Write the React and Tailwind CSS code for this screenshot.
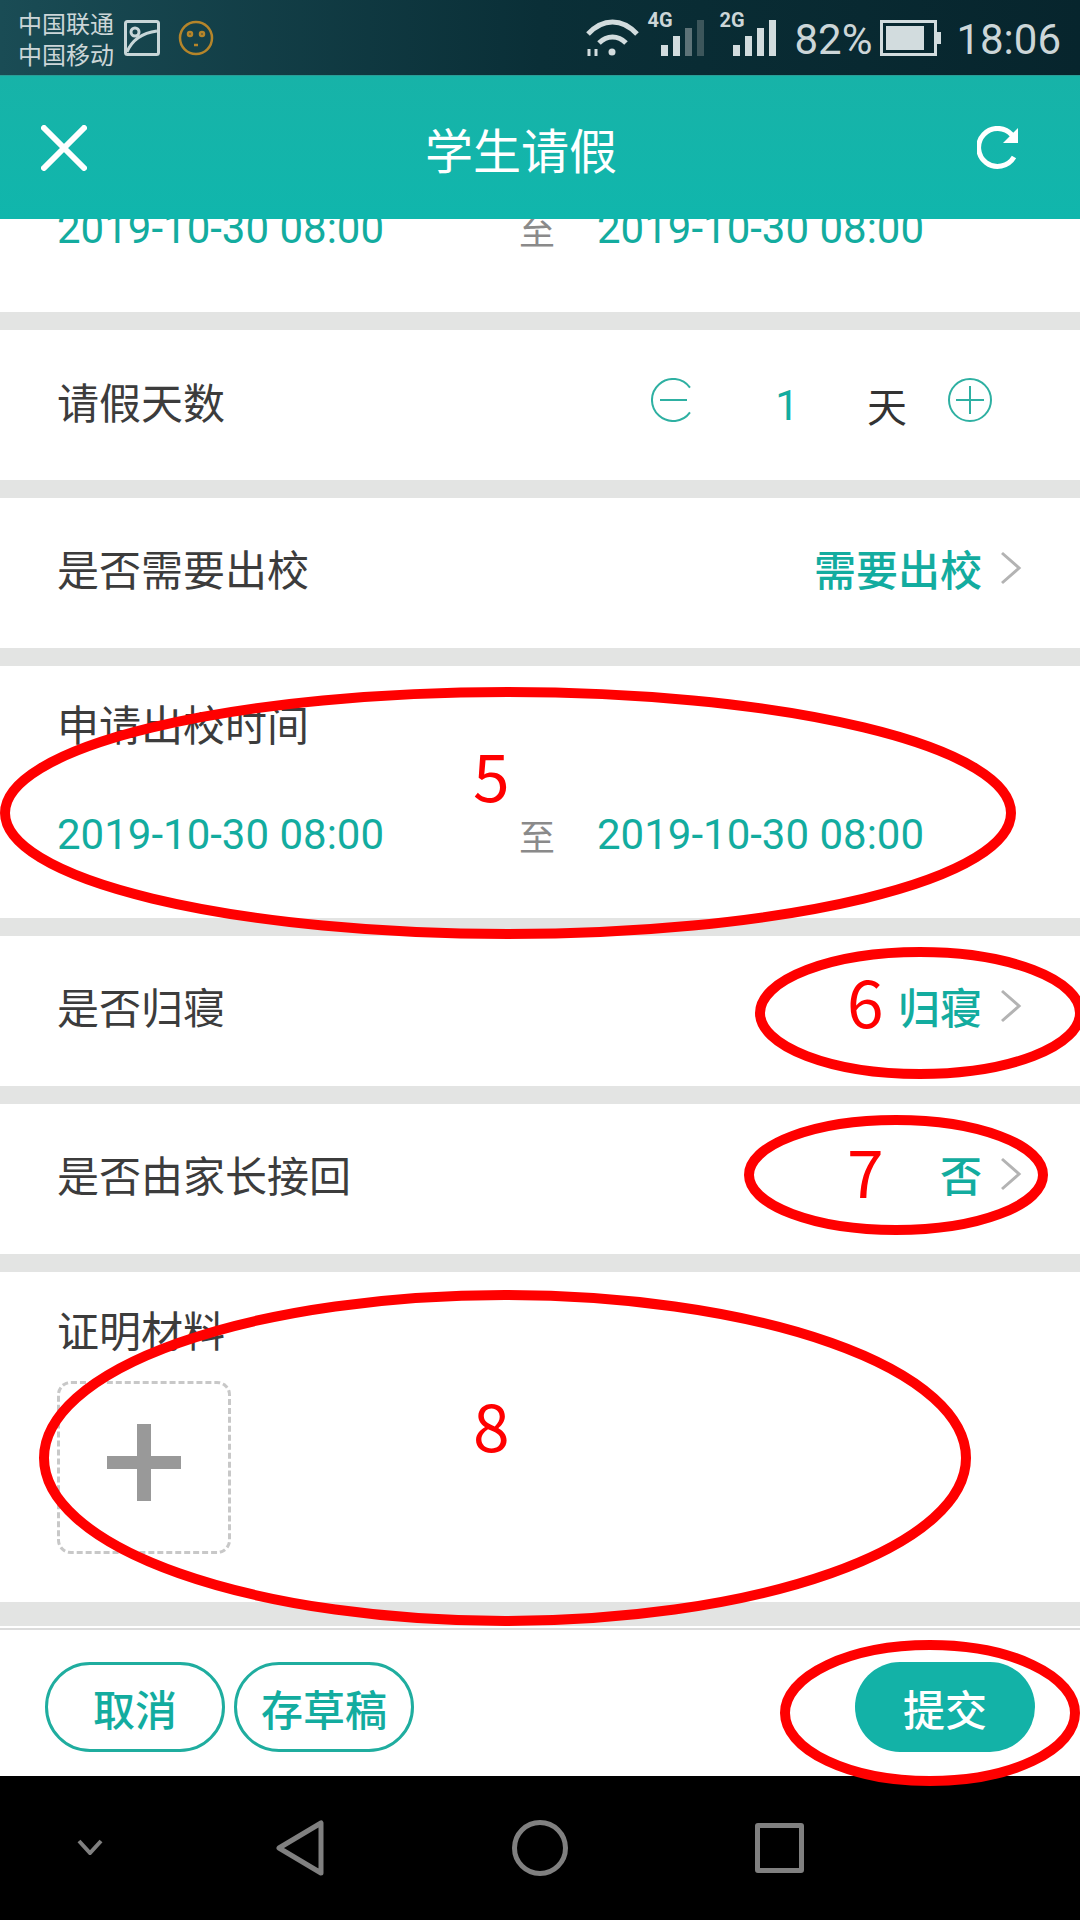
import React from 'react';

const cjk = "font-['Noto_Sans_CJK_SC','Noto_Sans',sans-serif]";
const roboto = "font-['Roboto','Noto_Sans_CJK_SC',sans-serif]";

const Divider = ({ className = 'h-[18px]' }) => <div className={`${className} bg-[#e3e4e3] shrink-0`} />;

const Chevron = () => (
  <svg width="22" height="34" viewBox="0 0 22 34" fill="none" stroke="#b3b3b3" strokeWidth="3">
    <path d="M2 2l17 15L2 32" />
  </svg>
);

const DateRange = () => (
  <div className={`flex items-center text-[42px] leading-[60px] text-[#13ac9f] ${roboto}`}>
    <span className="w-[462px] shrink-0">2019-10-30 08:00</span>
    <span className={`w-[78px] shrink-0 text-[36px] text-[#8a8a8a] ${cjk}`}>至</span>
    <span>2019-10-30 08:00</span>
  </div>
);

const SelectRow = ({ label, value }) => (
  <div className="h-[150px] shrink-0 bg-white flex items-center justify-between pl-[57px] pr-[58px] pb-[11px]">
    <span className="text-[42px] text-[#3c3c3c]">{label}</span>
    <div className="flex items-center gap-[18px]">
      <span className="text-[42px] font-medium text-[#13ac9f]">{value}</span>
      <Chevron />
    </div>
  </div>
);

const StatusBar = () => (
  <div className="h-[75px] shrink-0 flex items-center pl-[18px] pr-[19px] bg-gradient-to-r from-[#1a4c55] via-[#0a2f37] to-[#07252d] text-[#ccd6d8]">
    <div className={`w-[106px] text-[24px] leading-[31px] ${cjk}`}>
      <div>中国联通</div>
      <div>中国移动</div>
    </div>
    <svg width="36" height="36" viewBox="0 0 36 36" fill="none" stroke="#c8d6d8" strokeWidth="3" className="mr-[18px]">
      <rect x="1.5" y="1.5" width="33" height="33" rx="2" />
      <circle cx="11" cy="12" r="4" />
      <path d="M3 32C8 20 18 13 33 11" />
    </svg>
    <svg width="36" height="36" viewBox="0 0 36 36" fill="none" stroke="#b5852a" strokeWidth="2.5">
      <circle cx="18" cy="18" r="16" />
      <circle cx="12" cy="14" r="2" />
      <circle cx="24" cy="14" r="2" />
      <path d="M16 25h4" />
    </svg>
    <div className="flex-1" />
    <svg width="54" height="38" viewBox="0 0 54 38" fill="none" stroke="#d2dcde" strokeWidth="5" className="mr-[8px]">
      <path d="M3 15C18 -1 37 -1 52 15" />
      <path d="M14 24c8-8 19-8 27 0" />
      <circle cx="27" cy="33" r="3.5" fill="#d2dcde" stroke="none" />
      <path d="M4 37v-7M11 37v-7" strokeWidth="3" />
    </svg>
    {/* 4G bars, last ones are dim */}
    <div className="relative w-[57px] h-[40px] self-end mb-[19px]">
      <span className={`absolute left-0 top-[-11px] text-[20px] font-bold ${roboto}`}>4G</span>
      <div className="absolute right-0 bottom-0 flex items-end gap-[5px]">
        <div className="w-[7px] h-[11px] bg-[#d2dcde]" />
        <div className="w-[7px] h-[20px] bg-[#d2dcde]" />
        <div className="w-[7px] h-[28px] bg-[#5d7378]" />
        <div className="w-[7px] h-[36px] bg-[#3c565b]" />
      </div>
    </div>
    <div className="relative w-[57px] h-[40px] ml-[15px] self-end mb-[19px]">
      <span className={`absolute left-0 top-[-11px] text-[20px] font-bold ${roboto}`}>2G</span>
      <div className="absolute right-0 bottom-0 flex items-end gap-[5px]">
        <div className="w-[7px] h-[11px] bg-[#d2dcde]" />
        <div className="w-[7px] h-[20px] bg-[#d2dcde]" />
        <div className="w-[7px] h-[28px] bg-[#d2dcde]" />
        <div className="w-[7px] h-[36px] bg-[#d2dcde]" />
      </div>
    </div>
    <span className={`ml-[18px] mt-[4px] text-[42px] leading-none ${roboto}`}>82%</span>
    <div className="ml-[8px] flex items-center">
      <div className="w-[57px] h-[36px] border-[3px] border-[#d2dcde] p-[3px] flex">
        <div className="w-[38px] bg-[#d2dcde]" />
      </div>
      <div className="w-[4px] h-[12px] bg-[#d2dcde]" />
    </div>
    <span className={`ml-[15px] mt-[4px] text-[42px] leading-none ${roboto}`}>18:06</span>
  </div>
);

const Header = () => (
  <div className="h-[144px] shrink-0 flex items-center justify-between pl-[41px] pr-[59px] bg-gradient-to-b from-[#17b3a8] to-[#10b6ac] border-t border-[#2a9d96]">
    <svg width="46" height="46" viewBox="0 0 46 46" fill="none" stroke="white" strokeWidth="6" strokeLinecap="round">
      <path d="M3 3l40 40M43 3L3 43" />
    </svg>
    <span className="text-[48px] text-white -ml-[22px]">学生请假</span>
    <svg width="44" height="44" viewBox="0 0 44 44" fill="none" stroke="white" strokeWidth="5">
      <path d="M37 31A19 19 0 1 1 35 9" />
      <path d="M41 2v15H26" strokeWidth="0" fill="white" />
    </svg>
  </div>
);

const DayStepper = () => (
  <div className="h-[150px] shrink-0 bg-white flex items-center justify-between pl-[57px] pr-[88px] pb-[10px]">
    <span className="text-[42px] text-[#3c3c3c]">请假天数</span>
    <div className="flex items-center">
      <svg width="40" height="44" viewBox="0 0 40 44" fill="none" stroke="#2eb0a2" strokeWidth="2">
        <path d="M39 9.7A21 21 0 1 0 39 34.3" />
        <path d="M9 22h27" />
      </svg>
      <span className={`w-[40px] ml-[76px] pt-[10px] text-[42px] text-[#13ac9f] text-center ${roboto}`}>1</span>
      <span className="w-[40px] ml-[60px] pt-[10px] text-[40px] text-[#333]">天</span>
      <svg width="44" height="44" viewBox="0 0 44 44" fill="none" stroke="#2eb0a2" strokeWidth="2" className="ml-[41px]">
        <circle cx="22" cy="22" r="21" />
        <path d="M8 22h28M22 8v28" />
      </svg>
    </div>
  </div>
);

const Footer = () => (
  <div className="h-[148px] shrink-0 bg-white border-t-2 border-[#dcdcdc] flex items-center justify-between pl-[45px] pr-[45px] pt-[8px]">
    <div className="flex items-center gap-[9px]">
      <div className="w-[180px] h-[90px] rounded-full border-[3px] border-[#1fad9f] flex items-center justify-center text-[42px] font-medium text-[#13ac9f]">取消</div>
      <div className="w-[180px] h-[90px] rounded-full border-[3px] border-[#1fad9f] flex items-center justify-center text-[42px] font-medium text-[#13ac9f]">存草稿</div>
    </div>
    <div className="w-[180px] h-[90px] rounded-full bg-[#13b2a7] flex items-center justify-center text-[42px] font-medium text-white">提交</div>
  </div>
);

const NavBar = () => (
  <div className="flex-1 bg-black flex items-center pl-[77px]">
    <svg width="26" height="16" viewBox="0 0 26 16" fill="none" stroke="#808080" strokeWidth="4" className="mt-[-2px]">
      <path d="M2 2l11 12L24 2" />
    </svg>
    <svg width="48" height="56" viewBox="0 0 48 56" fill="none" stroke="#808080" strokeWidth="5" strokeLinejoin="round" className="ml-[173px]">
      <path d="M45 3v50L3 28z" />
    </svg>
    <svg width="56" height="56" viewBox="0 0 56 56" fill="none" stroke="#808080" strokeWidth="5" className="ml-[188px]">
      <circle cx="28" cy="28" r="25.5" />
    </svg>
    <div className="w-[49px] h-[50px] ml-[187px] border-[5px] border-[#808080] rounded-[3px]" />
  </div>
);

// red marker scribbled over the screenshot
const marks = [
  { cx: 508, cy: 813, rx: 503, ry: 121 },
  { cx: 920, cy: 1013, rx: 160, ry: 61 },
  { cx: 896, cy: 1175, rx: 147, ry: 55 },
  { cx: 505, cy: 1458, rx: 461, ry: 163 },
  { cx: 930, cy: 1713, rx: 145, ry: 68 },
];

const Annotations = () => (
  <>
    <svg width="1080" height="1920" viewBox="0 0 1080 1920" fill="none" stroke="#ff0000" strokeWidth="10" className="absolute left-0 top-0 pointer-events-none">
      {marks.map((m) => (
        <ellipse key={m.cy} cx={m.cx} cy={m.cy} rx={m.rx} ry={m.ry} />
      ))}
    </svg>
    <span className="absolute left-[473px] top-[725px] text-[66px] leading-[96px] text-[#ff0000]">5</span>
    <span className="absolute left-[847px] top-[951px] text-[66px] leading-[96px] text-[#ff0000]">6</span>
    <span className="absolute left-[847px] top-[1121px] text-[66px] leading-[96px] text-[#ff0000]">7</span>
    <span className="absolute left-[473px] top-[1375px] text-[66px] leading-[96px] text-[#ff0000]">8</span>
  </>
);

export default function App() {
  return (
    <div className={`relative w-[1080px] h-[1920px] overflow-hidden flex flex-col bg-white ${cjk}`}>
      <StatusBar />
      <Header />

      {/* previous section, scrolled under the header */}
      <div className="h-[93px] shrink-0 overflow-hidden flex items-end pl-[57px] pb-[53px]">
        <DateRange />
      </div>
      <Divider />
      <DayStepper />
      <Divider />
      <SelectRow label="是否需要出校" value="需要出校" />
      <Divider />

      <div className="h-[252px] shrink-0 pl-[57px] pt-[27px]">
        <div className="text-[42px] leading-[60px] text-[#3c3c3c]">申请出校时间</div>
        <div className="mt-[52px]">
          <DateRange />
        </div>
      </div>
      <Divider />
      <SelectRow label="是否归寝" value="归寝" />
      <Divider />
      <SelectRow label="是否由家长接回" value="否" />
      <Divider />

      <div className="h-[330px] shrink-0 pl-[57px] pt-[27px]">
        <div className="text-[42px] leading-[60px] text-[#3c3c3c]">证明材料</div>
        <div className="mt-[22px] w-[174px] h-[173px] rounded-[14px] border-[3px] border-dashed border-[#c8c8c8] flex items-center justify-center pb-[10px]">
          <div className="relative w-[74px] h-[77px]">
            <div className="absolute left-[30px] top-0 w-[14px] h-[77px] bg-[#999]" />
            <div className="absolute left-0 top-[32px] w-[74px] h-[13px] bg-[#999]" />
          </div>
        </div>
      </div>
      <Divider className="h-[24px]" />
      <div className="h-[2px] shrink-0 bg-white" />
      <Footer />
      <NavBar />
      <Annotations />
    </div>
  );
}
